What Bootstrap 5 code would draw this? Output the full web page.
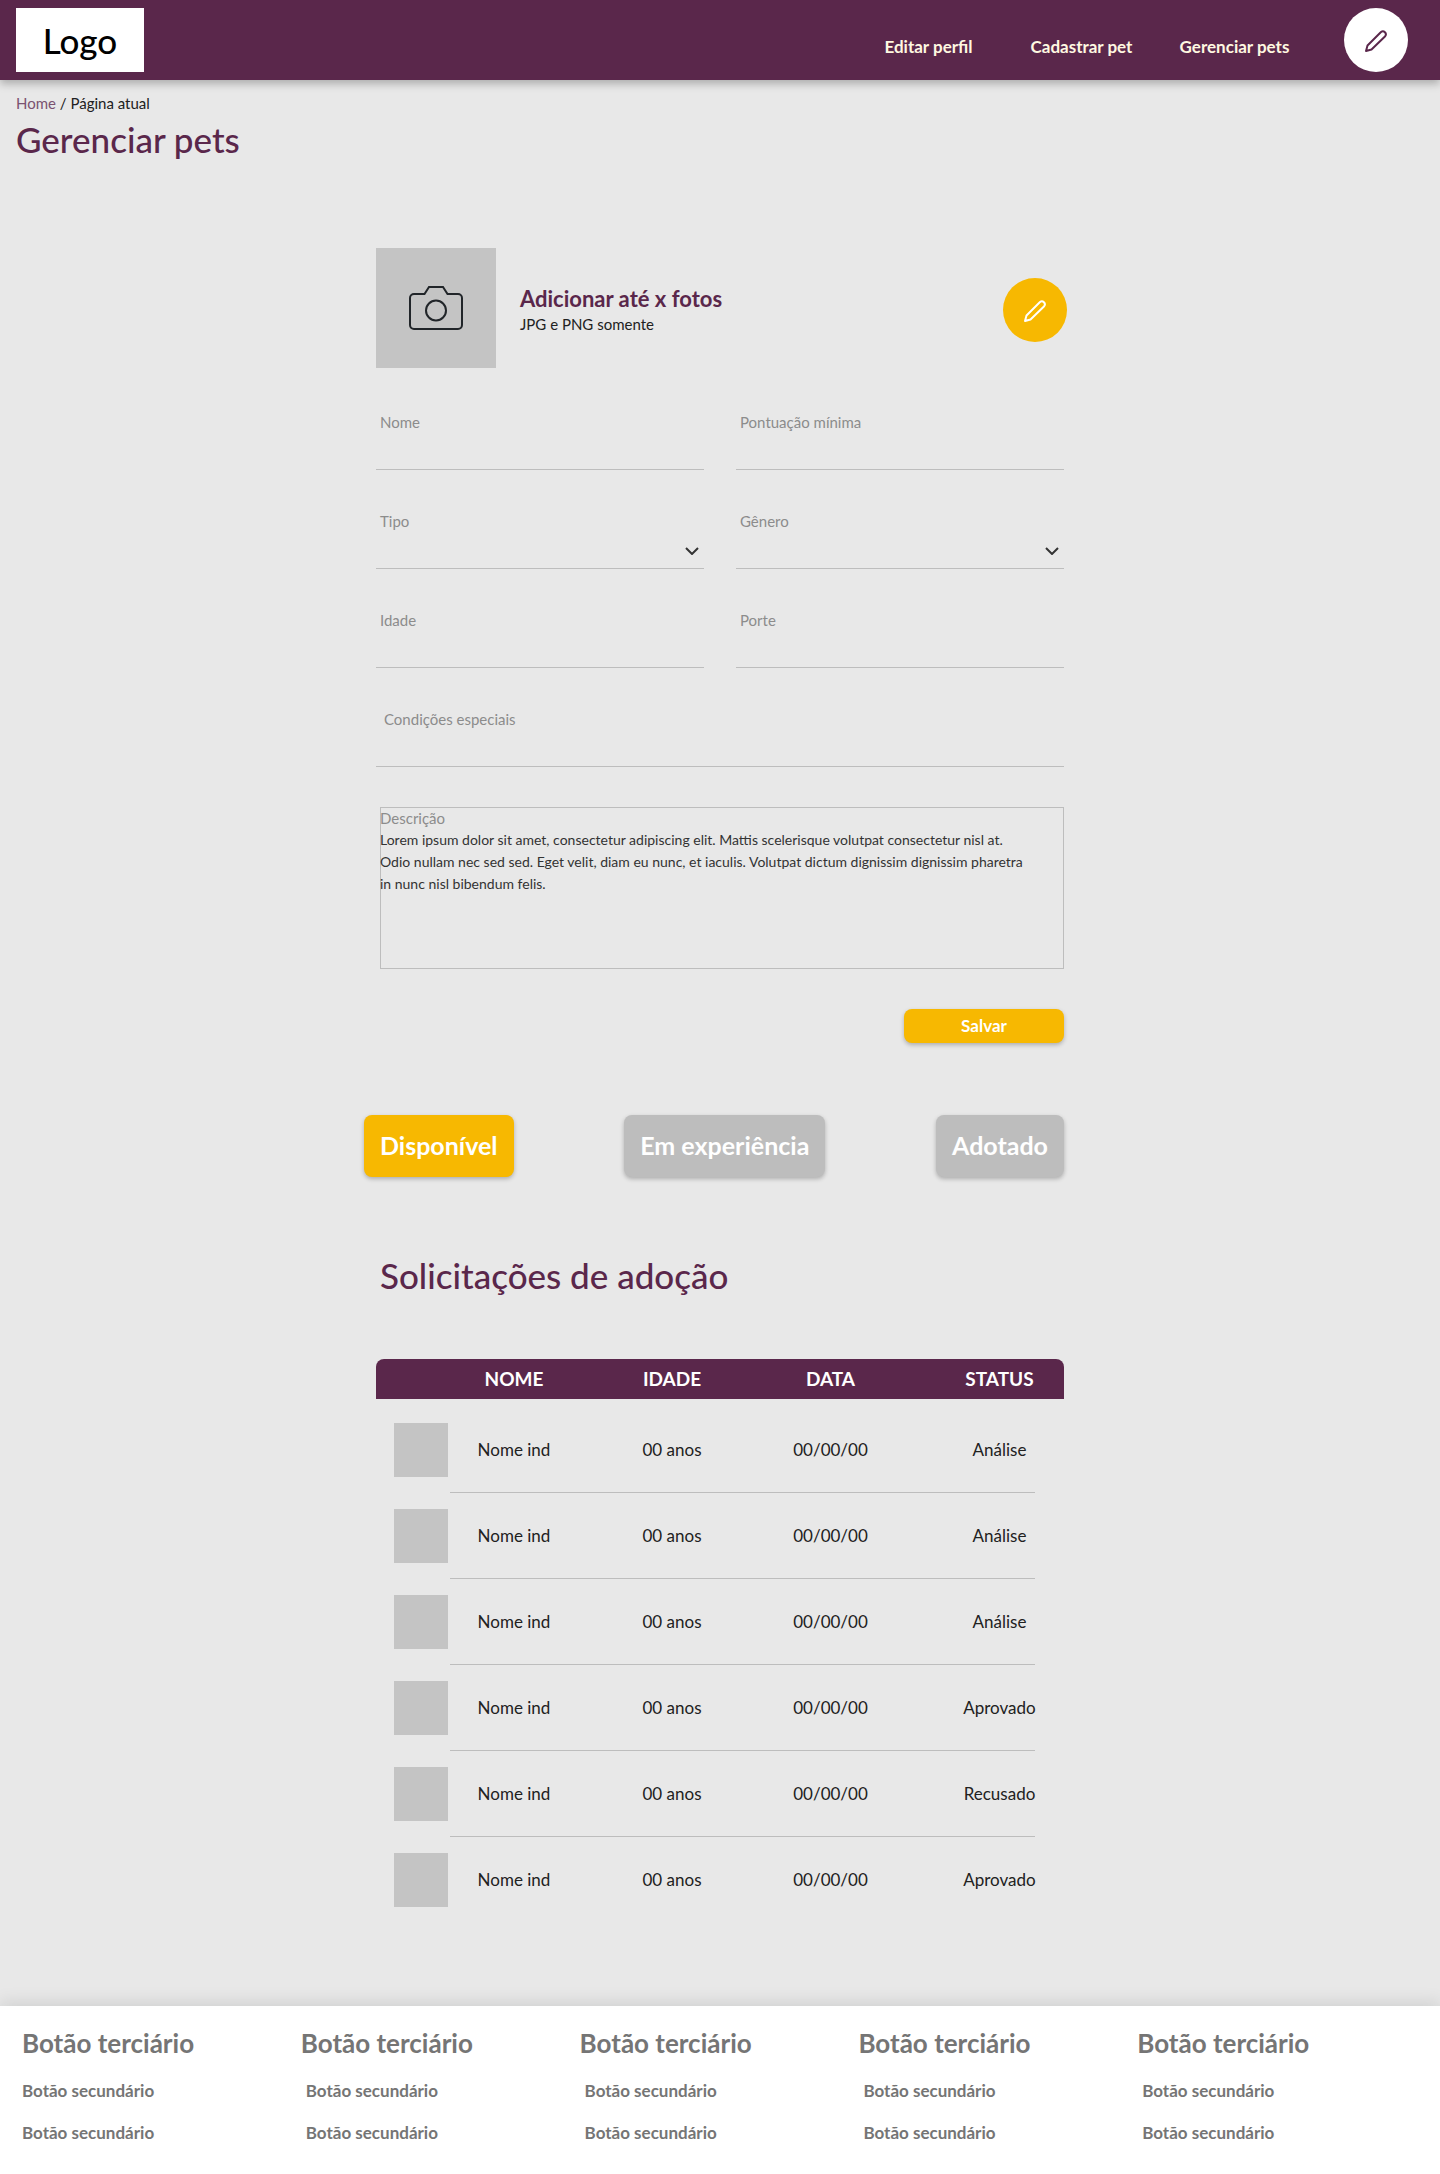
<!DOCTYPE html>
<html lang="pt-BR">
<head>
<meta charset="utf-8">
<meta name="viewport" content="width=device-width, initial-scale=1">
<title>Gerenciar pets</title>
<link rel="stylesheet" href="https://cdn.jsdelivr.net/npm/bootstrap@5.3.0/dist/css/bootstrap.min.css">
<style>
:root{--roxo:#5a274b;--amarelo:#f7b801;--linha:#bdbdbd;--foto:#c4c4c4}
body{background:#e8e8e8;color:#212121;font-family:Lato,"Noto Sans",sans-serif;font-size:15px;line-height:22px}
.topo{background:var(--roxo);height:80px;padding:8px 32px 8px 16px;box-shadow:0 4px 8px rgba(0,0,0,.25)}
.logo{width:128px;height:64px;background:#fff;color:#000;font-size:35px;line-height:64px;font-weight:500}
.topo .nav-link{width:153px;padding:8px 0;font-size:17px;line-height:24px;font-weight:700;color:#fff8e1;text-align:center}
.topo .nav{padding-top:19px;margin-right:33px}
.redondo{width:64px;height:64px;border:0;border-radius:50%;padding:0;flex:none}
.amarelo{background:var(--amarelo);margin-right:-3px}
.titulo{color:var(--roxo);font-size:35px;line-height:40px;font-weight:500;margin:0}
.trilha{padding:4px 0 5px}
.trilha a{color:#7a5270}
.miolo{max-width:720px;padding:0 16px;margin:89px auto 0}
.foto{width:120px;height:120px;border:0;padding:0;background:var(--foto)}
.subtitulo{color:var(--roxo);font-size:22px;line-height:28px;font-weight:700;margin:0}
.campo label{display:block;padding-left:4px;color:#8c8c8c}
.campo .form-control,.campo .form-select{height:37px;border:0;border-bottom:1px solid var(--linha);border-radius:0;background-color:transparent;padding:4px;font-size:15px}
.campo .form-select{background-image:url("data:image/svg+xml,%3Csvg xmlns='http://www.w3.org/2000/svg' viewBox='0 0 14 8'%3E%3Cpath d='M1 1l6 6 6-6' fill='none' stroke='%23333' stroke-width='2'/%3E%3C/svg%3E");background-size:14px 8px;background-position:right 5px top 15px}
.campos{--bs-gutter-x:32px;--bs-gutter-y:40px;padding-top:43px}
.caixa{margin-left:4px;box-shadow:inset 0 0 0 1px var(--linha);height:162px}
.caixa label{display:block;color:#8c8c8c}
.caixa textarea{height:132px;border:0;border-radius:0;padding:0;background:transparent;color:#333;font-size:14px;line-height:22px;resize:none}
.acao{border:0;border-radius:8px;color:#fff;font-weight:700;box-shadow:0 2px 4px rgba(0,0,0,.25)}
.acao:hover{color:#fff}
.salvar{width:160px;height:34px;padding:0;font-size:17px;background:var(--amarelo)}
.estado{height:62px;padding:0 16px;font-size:25px;background:var(--linha)}
.estado.atual{background:var(--amarelo)}
.estados{margin:72px 0 78px -12px}
.pedidos{--bs-table-bg:transparent;table-layout:fixed;margin:64px 0 0;text-align:center;vertical-align:middle;color:#212121}
.pedidos thead{vertical-align:middle}
.pedidos th{height:40px;padding:0;background:var(--roxo);color:#fff;font-size:19px;line-height:28px;font-weight:700}
.pedidos th:first-child{border-top-left-radius:8px}
.pedidos th:last-child{border-top-right-radius:8px}
.pedidos th:last-child,.pedidos td:last-child{padding-left:40px}
.pedidos td{height:86px;padding:0;font-size:17px;line-height:24px}
.pedidos tbody::before{content:"";display:block;height:8px}
.pedidos tbody tr:not(:last-child){background:linear-gradient(var(--linha),var(--linha)) 74px 100%/calc(100% - 103px) 1px no-repeat}
.retrato{width:54px;height:54px;margin-left:18px;background:var(--foto)}
.rodape{background:#fff;margin-top:83px;padding:21px 24px 30px 22px;box-shadow:0 -4px 16px rgba(0,0,0,.1)}
.rodape a{display:block;color:#757575;text-decoration:none;font-weight:700;font-size:17px;line-height:24px;margin-top:18px}
.rodape a.maior{font-size:26px;line-height:32px;margin:0 0 20px}
.rodape .recuo{padding-left:5px}
</style>
</head>
<body>
<header class="topo d-flex justify-content-between">
  <a class="logo text-center text-decoration-none" href="#">Logo</a>
  <div class="d-flex align-items-start">
    <nav class="nav flex-nowrap">
      <a class="nav-link" href="#">Editar perfil</a>
      <a class="nav-link" href="#">Cadastrar pet</a>
      <a class="nav-link" href="#">Gerenciar pets</a>
    </nav>
    <button class="redondo bg-white" type="button" aria-label="Editar">
      <svg width="24" height="24" viewBox="0 0 24 24" fill="none" stroke="#5a274b" stroke-width="2" stroke-linejoin="round"><path d="M2 22L3.500 16.500L17 3a3 3 0 0 1 4.200 4.200L7.500 20.500Z"/></svg>
    </button>
  </div>
</header>
<main>
  <div class="px-3 pt-2">
    <nav class="trilha"><a class="text-decoration-none" href="#">Home</a> / Página atual</nav>
    <h1 class="titulo">Gerenciar pets</h1>
  </div>
  <div class="miolo">
    <form>
      <div class="d-flex align-items-center">
        <button class="foto" type="button" aria-label="Adicionar foto">
          <svg width="54" height="44" viewBox="0 0 54 44" fill="none" stroke="#212529" stroke-width="2"><path d="M5 8H15.500L20 1H34L38.500 8H49A4 4 0 0 1 53 12V39A4 4 0 0 1 49 43H5A4 4 0 0 1 1 39V12A4 4 0 0 1 5 8Z"/><circle cx="27" cy="24.500" r="10"/></svg>
        </button>
        <div class="d-flex align-items-center flex-grow-1 ms-4 pt-1">
          <div class="flex-grow-1">
            <h2 class="subtitulo">Adicionar até x fotos</h2>
            <div>JPG e PNG somente</div>
          </div>
          <button class="redondo amarelo" type="button" aria-label="Editar fotos">
            <svg width="24" height="24" viewBox="0 0 24 24" fill="none" stroke="#fff" stroke-width="2" stroke-linejoin="round"><path d="M2 22L3.500 16.500L17 3a3 3 0 0 1 4.200 4.200L7.500 20.500Z"/></svg>
          </button>
        </div>
      </div>
      <div class="row campos">
        <div class="col-6 campo"><label for="nome">Nome</label><input class="form-control" id="nome" type="text"></div>
        <div class="col-6 campo"><label for="pont">Pontuação mínima</label><input class="form-control" id="pont" type="text"></div>
        <div class="col-6 campo"><label for="tipo">Tipo</label><select class="form-select" id="tipo"><option></option></select></div>
        <div class="col-6 campo"><label for="gen">Gênero</label><select class="form-select" id="gen"><option></option></select></div>
        <div class="col-6 campo"><label for="idade">Idade</label><input class="form-control" id="idade" type="text"></div>
        <div class="col-6 campo"><label for="porte">Porte</label><input class="form-control" id="porte" type="text"></div>
        <div class="col-12 campo"><label class="ps-2" for="cond">Condições especiais</label><input class="form-control" id="cond" type="text"></div>
        <div class="col-12"><div class="caixa"><label for="desc">Descrição</label><textarea class="form-control" id="desc">Lorem ipsum dolor sit amet, consectetur adipiscing elit. Mattis scelerisque volutpat consectetur nisl at.
Odio nullam nec sed sed. Eget velit, diam eu nunc, et iaculis. Volutpat dictum dignissim dignissim pharetra
in nunc nisl bibendum felis.</textarea></div></div>
        <div class="col-12 d-flex justify-content-end"><button class="btn acao salvar" type="button">Salvar</button></div>
      </div>
    </form>
    <div class="estados d-flex justify-content-between">
      <button class="btn acao estado atual" type="button">Disponível</button>
      <button class="btn acao estado" type="button">Em experiência</button>
      <button class="btn acao estado" type="button">Adotado</button>
    </div>
    <h2 class="titulo ps-1">Solicitações de adoção</h2>
    <table class="table table-borderless pedidos">
      <colgroup><col style="width:74px"><col style="width:128px"><col style="width:188px"><col style="width:129px"><col></colgroup>
      <thead><tr><th aria-label="Foto"></th><th>NOME</th><th>IDADE</th><th>DATA</th><th>STATUS</th></tr></thead>
      <tbody>
        <tr><td><div class="retrato"></div></td><td>Nome ind</td><td>00 anos</td><td>00/00/00</td><td>Análise</td></tr>
        <tr><td><div class="retrato"></div></td><td>Nome ind</td><td>00 anos</td><td>00/00/00</td><td>Análise</td></tr>
        <tr><td><div class="retrato"></div></td><td>Nome ind</td><td>00 anos</td><td>00/00/00</td><td>Análise</td></tr>
        <tr><td><div class="retrato"></div></td><td>Nome ind</td><td>00 anos</td><td>00/00/00</td><td>Aprovado</td></tr>
        <tr><td><div class="retrato"></div></td><td>Nome ind</td><td>00 anos</td><td>00/00/00</td><td>Recusado</td></tr>
        <tr><td><div class="retrato"></div></td><td>Nome ind</td><td>00 anos</td><td>00/00/00</td><td>Aprovado</td></tr>
      </tbody>
    </table>
  </div>
</main>
<footer class="rodape">
  <div class="row row-cols-5 g-0">
    <div class="col"><a class="maior" href="#">Botão terciário</a><a href="#">Botão secundário</a><a href="#">Botão secundário</a></div>
    <div class="col"><a class="maior" href="#">Botão terciário</a><a class="recuo" href="#">Botão secundário</a><a class="recuo" href="#">Botão secundário</a></div>
    <div class="col"><a class="maior" href="#">Botão terciário</a><a class="recuo" href="#">Botão secundário</a><a class="recuo" href="#">Botão secundário</a></div>
    <div class="col"><a class="maior" href="#">Botão terciário</a><a class="recuo" href="#">Botão secundário</a><a class="recuo" href="#">Botão secundário</a></div>
    <div class="col"><a class="maior" href="#">Botão terciário</a><a class="recuo" href="#">Botão secundário</a><a class="recuo" href="#">Botão secundário</a></div>
  </div>
</footer>
<script src="https://cdn.jsdelivr.net/npm/bootstrap@5.3.0/dist/js/bootstrap.bundle.min.js"></script>
</body>
</html>
